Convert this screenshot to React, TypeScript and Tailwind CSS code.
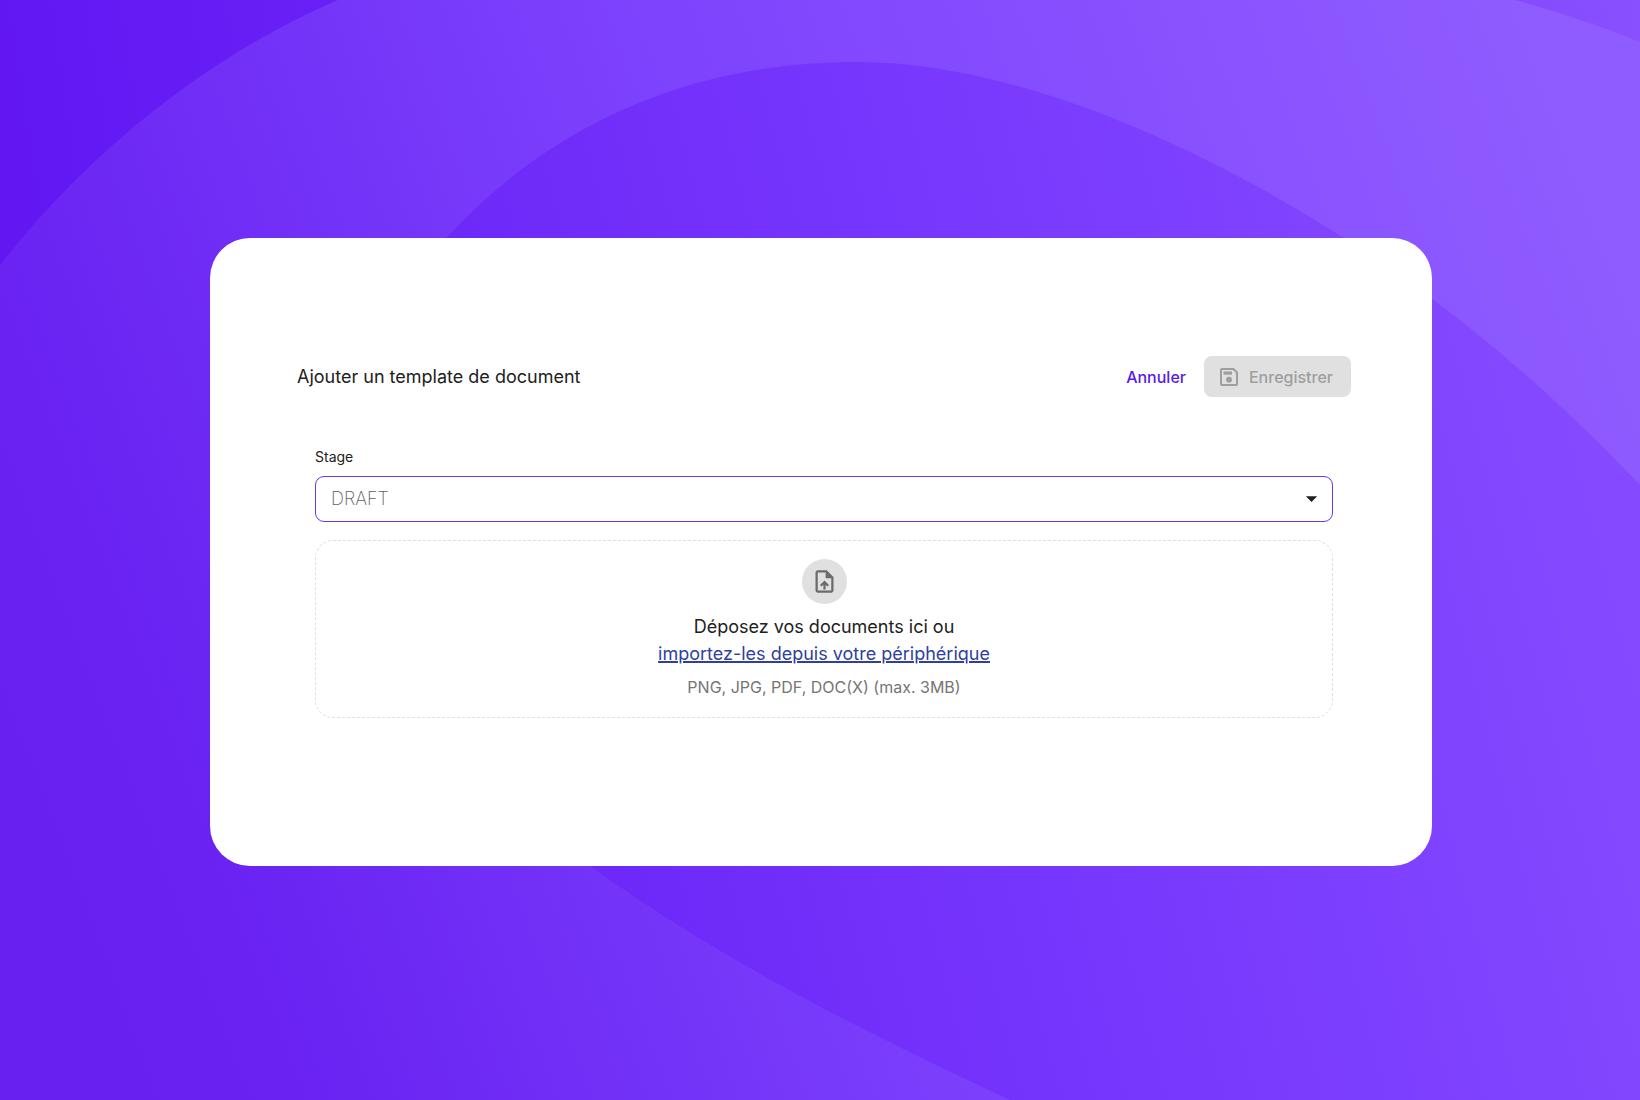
import React, { useState } from "react";
import { MdArrowDropDown, MdUploadFile } from "react-icons/md";

const stages = ["DRAFT", "REVIEW", "SIGNED"];

function Background() {
  return (
    <svg
      className="absolute inset-0 h-full w-full"
      viewBox="0 0 1640 1100"
      preserveAspectRatio="none"
      aria-hidden="true"
    >
      <defs>
        <linearGradient id="base" gradientUnits="userSpaceOnUse" x1="0" y1="250" x2="1640" y2="0">
          <stop offset="0" stopColor="#6116f2" />
          <stop offset="0.5" stopColor="#712efb" />
          <stop offset="1" stopColor="#8850ff" />
        </linearGradient>
        <linearGradient id="ring" gradientUnits="userSpaceOnUse" x1="0" y1="800" x2="1600" y2="200">
          <stop offset="0" stopColor="#6820f1" />
          <stop offset="0.1" stopColor="#6922f2" />
          <stop offset="0.5" stopColor="#7d42fd" />
          <stop offset="1" stopColor="#8f5cff" />
        </linearGradient>
        <linearGradient id="inner" gradientUnits="userSpaceOnUse" x1="400" y1="620" x2="1560" y2="320">
          <stop offset="0" stopColor="#6a24f6" />
          <stop offset="0.5" stopColor="#7737fd" />
          <stop offset="1" stopColor="#854aff" />
        </linearGradient>
      </defs>
      <rect width="1640" height="1100" fill="url(#base)" />
      <path
        d="M0 265C90 150 210 55 338 0H1515Q1580 18 1640 42V1100H0Z"
        fill="url(#ring)"
      />
      <path
        d="M446 238C550 125 690 62 857 62C1010 62 1190 140 1344 238C1450 305 1550 390 1640 485V1100H1010C870 1035 720 960 590 866C400 720 330 400 446 238Z"
        fill="url(#inner)"
      />
    </svg>
  );
}

function SaveIcon() {
  return (
    <svg className="size-[18px]" viewBox="0 0 18 18" fill="none" aria-hidden="true">
      <path
        d="M2 1h11.500L17 4.500v11.500a1 1 0 0 1-1 1H2a1 1 0 0 1-1-1V2a1 1 0 0 1 1-1Z"
        stroke="currentColor"
        strokeWidth="2"
        strokeLinejoin="round"
      />
      <path d="M3.500 3.500h8.500v3.200H3.500z" fill="currentColor" />
      <circle cx="9" cy="11.700" r="2.900" fill="currentColor" />
    </svg>
  );
}

function App() {
  const [stage, setStage] = useState("DRAFT");

  return (
    <div className="relative flex min-h-screen items-center justify-center bg-[#6b26f5] pt-1 pr-[208px] pl-[210px] font-['Inter',sans-serif] text-[#212121]">
      <Background />

      <main className="relative w-full rounded-[40px] bg-white pt-[118px] pr-[81px] pb-[148px] pl-[87px]">
        {/* Header */}
        <div className="flex items-center justify-between">
          <h1 className="text-lg">Ajouter un template de document</h1>
          <div className="flex items-center gap-[18px]">
            <button type="button" className="text-base font-medium text-[#5a1be6]">
              Annuler
            </button>
            <button
              type="button"
              disabled
              className="flex h-[41px] items-center gap-[11px] rounded-lg bg-[#e0e0e0] pr-[18px] pl-4 text-base font-medium text-[#9e9e9e]"
            >
              <SaveIcon />
              Enregistrer
            </button>
          </div>
        </div>

        {/* Form */}
        <form className="px-[18px] pt-[50px]">
          <label htmlFor="stage" className="block text-sm leading-5">
            Stage
          </label>
          <div className="relative mt-[9px]">
            <select
              id="stage"
              className="h-[46px] w-full appearance-none rounded-[9px] border border-[#6f35e8] bg-white px-[15px] text-lg font-extralight text-[#616161]"
              value={stage}
              onChange={(e) => setStage(e.target.value)}
            >
              {stages.map((item) => (
                <option key={item} value={item}>
                  {item}
                </option>
              ))}
            </select>
            <MdArrowDropDown className="pointer-events-none absolute top-[9px] right-2 size-[27px]" />
          </div>

          {/* Drop zone */}
          <div className="mt-[18px] flex h-[178px] flex-col items-center rounded-[18px] border border-dashed border-[#e0e0e0] pt-[18px]">
            <div className="flex size-[45px] items-center justify-center rounded-full bg-[#e0e0e0] text-[#6b6b6b]">
              <MdUploadFile className="size-[27px]" />
            </div>
            <p className="mt-[9px] text-lg leading-[27px]">Déposez vos documents ici ou</p>
            <a href="#import" className="text-lg leading-[27px] text-[#303f9f] underline decoration-2">
              importez-les depuis votre périphérique
            </a>
            <p className="mt-2 text-base leading-6 text-[#757575]">
              PNG, JPG, PDF, DOC(X) (max. 3MB)
            </p>
          </div>
        </form>
      </main>
    </div>
  );
}

export default App;
